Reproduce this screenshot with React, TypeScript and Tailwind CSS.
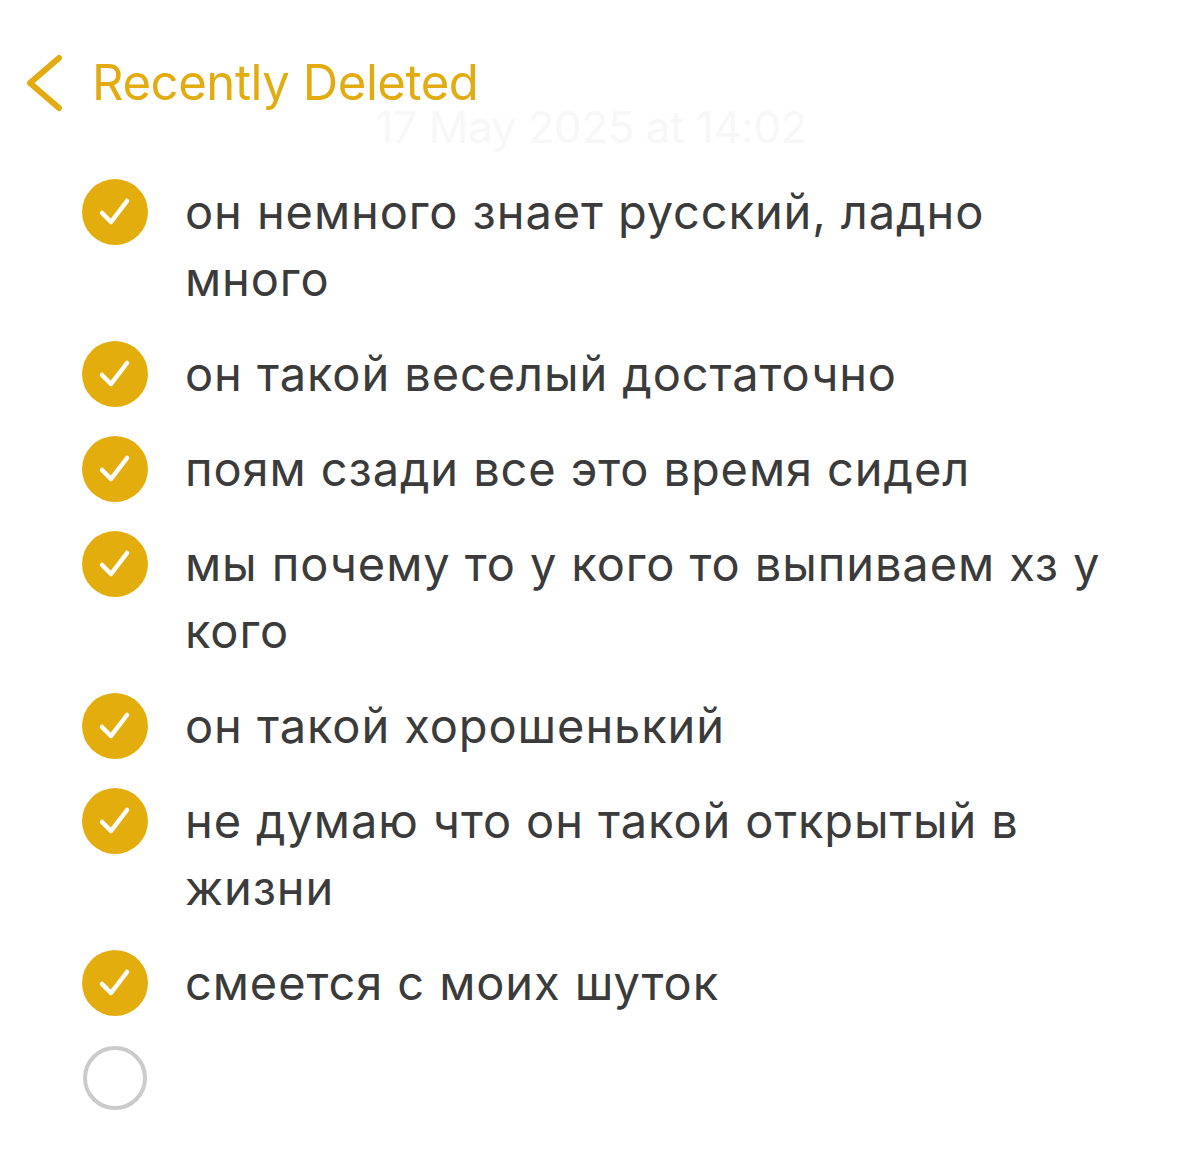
import React from "react";

const items: { text: string; done: boolean }[] = [
  { text: "он немного знает русский, ладно много", done: true },
  { text: "он такой веселый достаточно", done: true },
  { text: "поям сзади все это время сидел", done: true },
  { text: "мы почему то у кого то выпиваем хз у кого", done: true },
  { text: "он такой хорошенький", done: true },
  { text: "не думаю что он такой открытый в жизни", done: true },
  { text: "смеется с моих шуток", done: true },
  { text: "", done: false },
];

function CheckCircle({ done }: { done: boolean }) {
  if (!done) {
    return <div className="w-[64px] h-[64px] rounded-full border-[4px] border-[#cbcbcb]" />;
  }
  return (
    <div className="w-[66px] h-[66px] rounded-full bg-[#e4ad0e] flex items-center justify-center">
      <svg width="36" height="36" viewBox="0 0 36 36" fill="none">
        <path d="M5 19 L14 28 L30 7" stroke="#fff" strokeWidth="4.5" strokeLinecap="round" strokeLinejoin="round" />
      </svg>
    </div>
  );
}

export default function App() {
  return (
    <div className="min-h-[1157px] bg-white font-['Inter','Noto_Sans',sans-serif]">
      {/* nav */}
      <div className="flex items-center pt-[61px] pl-[26px]">
        <svg width="40" height="58" viewBox="0 0 40 58" fill="none" className="-my-[7px]">
          <path d="M33 4 L4 29 L33 54" stroke="#e2ab10" strokeWidth="6" strokeLinecap="round" strokeLinejoin="round" />
        </svg>
        <span className="ml-[26px] text-[49px] leading-[44px] text-[#e2ab10] tracking-[-0.4px]">Recently Deleted</span>
      </div>
      <div className="text-center text-[44px] leading-[44px] text-[#f7f7f7] pl-[4px] tracking-[-0.5px]">17 May 2025 at 14:02</div>

      {/* checklist */}
      <div className="flex flex-col gap-[28px] mt-[29px] pl-[82px] pr-[58px]">
        {items.map((it, i) => (
          <div key={i} className="flex items-start">
            <div className="w-[66px] h-[67px] flex items-center justify-center shrink-0">
              <CheckCircle done={it.done} />
            </div>
            <p className="ml-[37px] text-[47px] leading-[67px] tracking-[0.9px] text-[#3b3b3b] min-h-[67px]">{it.text}</p>
          </div>
        ))}
      </div>
    </div>
  );
}
